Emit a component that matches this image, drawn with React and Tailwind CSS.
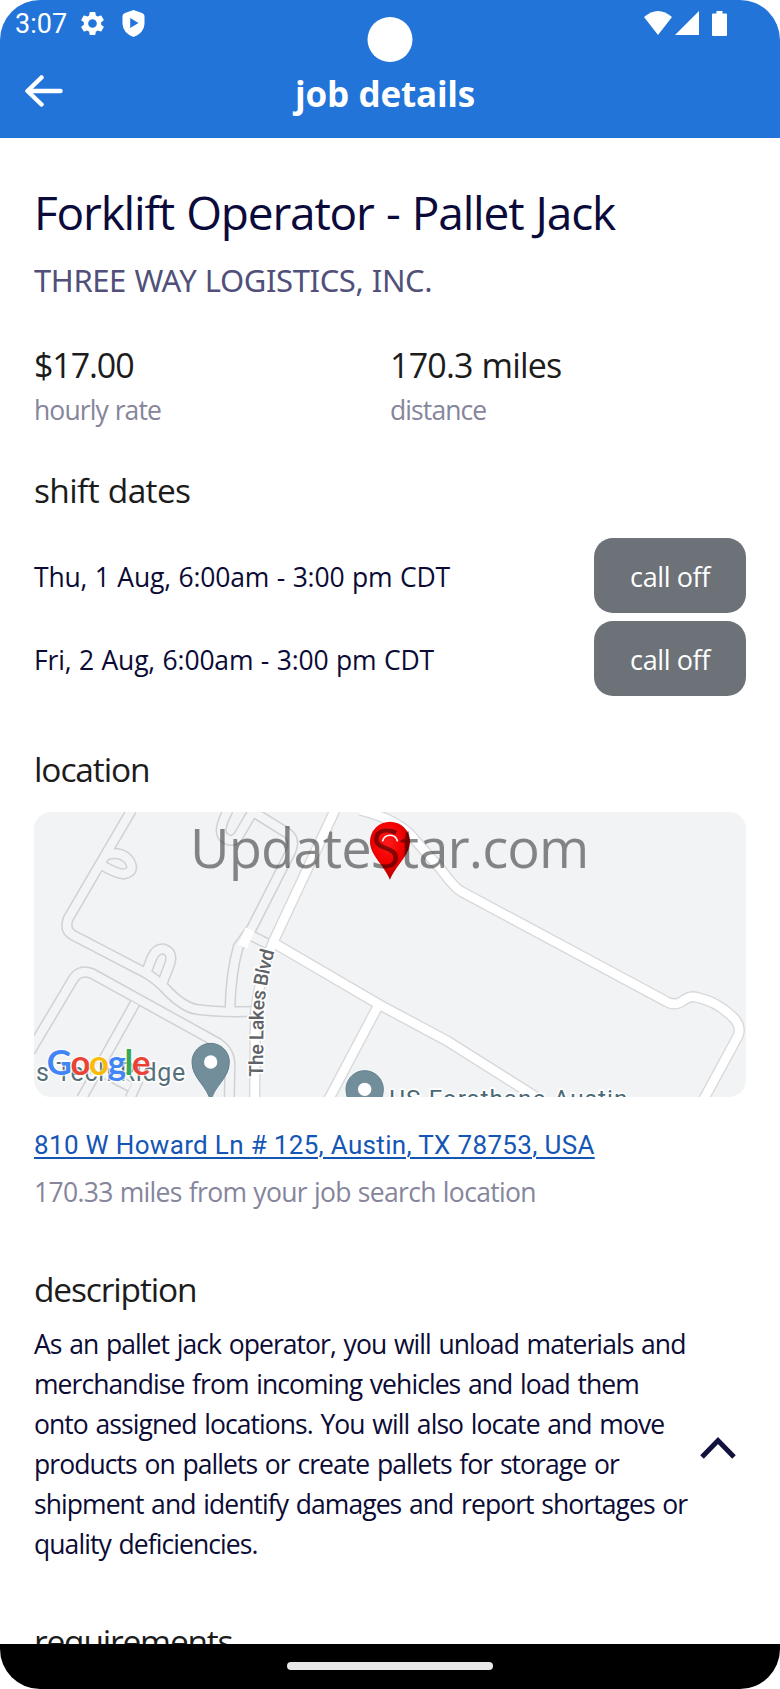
import { MdSettings } from 'react-icons/md';

const shifts = [
  { id: 1, label: 'Thu, 1 Aug, 6:00am - 3:00 pm CDT' },
  { id: 2, label: 'Fri, 2 Aug, 6:00am - 3:00 pm CDT' },
];

const description = [
  'As an pallet jack operator, you will unload materials and',
  'merchandise from incoming vehicles and load them',
  'onto assigned locations. You will also locate and move',
  'products on pallets or create pallets for storage or',
  'shipment and identify damages and report shortages or',
  'quality deficiencies.',
];

// Roads without a fill of their own, drawn as two thin edges
const minorRoads = [
  'M335 30 L145 355 Q132 390 158 405 L375 518 Q410 538 440 570 Q490 622 530 628 Q600 638 700 634',
  'M258 165 Q300 152 325 178 Q350 215 312 222 Q290 222 245 195',
  'M378 520 L395 475 Q408 445 430 447 Q460 455 450 490 L425 555',
  'M30 755 L155 545 Q175 505 215 520 L595 730 Q632 755 630 800 L628 895',
  'M345 610 L185 895',
  'M235 810 L330 860 M355 840 L330 895',
  'M625 30 Q590 95 612 112 Q640 135 660 100 L695 40',
  'M690 30 L800 98 Q828 118 812 155 L695 385 L655 440 Q632 520 630 630',
  'M690 405 L760 440',
];

const mainRoads = [
  'M945 30 L760 425 Q720 520 706 640 L704 895',
  'M760 428 L1080 615 L1280 722 L1550 892',
  'M1072 622 L925 900',
  'M1020 30 Q1140 60 1185 120 L1262 207 Q1305 265 1325 275 L1940 605 Q1962 618 1985 605 Q2010 585 2030 592 Q2090 605 2135 648 Q2165 675 2155 706 L2050 900',
];

function StatusBar() {
  return (
    <div className="flex h-11 items-center justify-between pl-[15px] pr-[53px]">
      <div className="flex items-center">
        <span className="w-[64px] pt-[4px] font-['Roboto'] text-[27px] leading-none">3:07</span>
        <MdSettings className="size-[29px] -ml-px mt-[2px]" />
        <svg className="ml-[15px] mt-[2px] h-[27px] w-[23px]" viewBox="0 0 23 27" fill="currentColor">
          <path
            fillRule="evenodd"
            d="M11.5 0 L20 3 Q22.500 4 22.500 6 V14 Q22 23 11.500 27 Q1 23 .5 14 V6 Q.5 4 3 3 Z M8.200 8 V18 L16.500 13 Z"
          />
        </svg>
      </div>
      <div className="mt-[2px] flex items-center">
        <svg className="h-6 w-7" viewBox="0 0 28 24" fill="currentColor">
          <path d="M0 6 Q14 -6 28 6 L14 24 Z" />
        </svg>
        <svg className="ml-[3px] h-6 w-6" viewBox="0 0 24 24" fill="currentColor">
          <path d="M24 0 V24 H0 Z" />
        </svg>
        <svg className="ml-[13px] h-[25px] w-[15px]" viewBox="0 0 15 25" fill="currentColor">
          <path d="M4.500 0 H10.500 V2.500 H14 Q15 2.500 15 3.500 V24 Q15 25 14 25 H1 Q0 25 0 24 V3.500 Q0 2.500 1 2.500 H4.500 Z" />
        </svg>
      </div>
    </div>
  );
}

function Header() {
  return (
    <header className="relative h-[138px] shrink-0 rounded-t-[40px] bg-[#2274d9] text-white">
      <StatusBar />
      <div className="absolute left-1/2 top-[17px] size-[45px] -translate-x-1/2 rounded-full bg-white" />
      <div className="grid h-[94px] grid-cols-[1fr_auto_1fr] items-center pl-6 pr-[34px]">
        <button type="button" className="h-8 w-10" aria-label="Back">
          <svg className="h-8 w-10" viewBox="0 0 40 32" fill="none" stroke="currentColor" strokeWidth="4.500" strokeLinecap="round" strokeLinejoin="round">
            <path d="M36.500 16 H4 M17.500 2.500 L3.500 16 L17.500 29.500" />
          </svg>
        </button>
        <h1 className="pt-[5px] text-[35px] font-bold leading-[44px] tracking-[-0.2px]">job details</h1>
      </div>
    </header>
  );
}

function PlacePin({ x, y }) {
  return (
    <g transform={`translate(${x} ${y})`}>
      <path d="M0 122 C-8 70 -56 52 -56 0 A56 56 0 0 1 56 0 C56 52 8 70 0 122 Z" fill="#728e9b" stroke="#5f7f8d" strokeWidth="3" />
      <circle r="20" fill="#fff" />
    </g>
  );
}

function LocationMap() {
  return (
    <svg className="mt-[21px] block h-[285px] w-full rounded-[17px] bg-[#f1f3f4]" viewBox="42 36 2136 855" fill="none">
      <defs>
        <radialGradient id="marker" cx="45%" cy="35%" r="65%">
          <stop offset="0" stopColor="#ff1a1a" />
          <stop offset="0.55" stopColor="#f20000" />
          <stop offset="1" stopColor="#b00000" />
        </radialGradient>
        <path id="lakes" d="M729 830 L731 640 Q735 560 766 445" />
      </defs>

      <g strokeLinejoin="round">
        {minorRoads.map((d) => <path key={d} d={d} stroke="#d0d1d3" strokeWidth="34" />)}
        {minorRoads.map((d) => <path key={d} d={d} stroke="#f2f4f5" strokeWidth="25" />)}
        {mainRoads.map((d) => <path key={d} d={d} stroke="#d6d8db" strokeWidth="34" />)}
        {mainRoads.map((d) => <path key={d} d={d} stroke="#fff" strokeWidth="26" />)}
        <path d="M690 388 L668 440" stroke="#fff" strokeWidth="29" />
      </g>

      <g fontFamily="Roboto, sans-serif" stroke="#fff" strokeWidth="10" strokeLinejoin="round" paintOrder="stroke">
        <text fontSize="59" fill="#5f6368" fontWeight="500">
          <textPath href="#lakes" textLength="380">The Lakes Blvd</textPath>
        </text>
        <text x="48" y="844" fontSize="75" fill="#567079" textLength="448">s Tech Ridge</text>
        <text x="1108" y="921" fontSize="73" fill="#4c6a76" textLength="714">US Forathane Austin</text>
      </g>
      <PlacePin x={572} y={786} />
      <PlacePin x={1034} y={868} />

      <text x="80" y="824" fontFamily="Lato, sans-serif" fontWeight="700" fontSize="104" letterSpacing="-4" stroke="#fff" strokeWidth="8" strokeOpacity="0.7" paintOrder="stroke">
        <tspan fill="#4285f4">G</tspan>
        <tspan fill="#ea4335">o</tspan>
        <tspan fill="#fbbc05">o</tspan>
        <tspan fill="#4285f4">g</tspan>
        <tspan fill="#34a853">l</tspan>
        <tspan fill="#ea4335">e</tspan>
      </text>

      <path d="M1110 239 C1092 195 1050 165 1050 125 A60 60 0 0 1 1170 125 C1170 165 1128 195 1110 239 Z" fill="url(#marker)" />
      <path d="M1088 122 A23 23 0 0 1 1132 122" stroke="#fff" strokeWidth="5" strokeLinecap="round" />
      <text x="510" y="203" fontFamily="Open Sans, sans-serif" fontSize="163" fill="#000" fillOpacity="0.46" textLength="1198">UpdateStar.com</text>
    </svg>
  );
}

export default function App() {
  return (
    <div className="flex h-[1689px] w-[780px] flex-col overflow-hidden bg-white font-['Open_Sans',sans-serif] [word-spacing:0.8px]">
      <Header />

      <main className="min-h-0 flex-1 overflow-hidden px-[34px] pt-[44px] text-[#1c1c1c]">
        <h2 className="whitespace-nowrap text-[46px] leading-[60px] tracking-[-1.19px] text-[#0b0b3b] [word-spacing:1.5px]">Forklift Operator - Pallet Jack</h2>
        <p className="mt-[18px] font-['Noto_Sans'] text-[31px] leading-10 tracking-[-0.4px] text-[#50507a]">THREE WAY LOGISTICS, INC.</p>

        <div className="mt-[43px] grid grid-cols-2">
          <div>
            <p className="text-[34px] leading-[44px] tracking-[-1.1px]">$17.00</p>
            <p className="mt-[5px] text-[26.5px] leading-9 tracking-[-0.9px] text-[#85859b]">hourly rate</p>
          </div>
          <div>
            <p className="text-[34px] leading-[44px] tracking-[-0.8px]">170.3 miles</p>
            <p className="mt-[5px] text-[26.5px] leading-9 tracking-[-0.9px] text-[#85859b]">distance</p>
          </div>
        </div>

        <h3 className="mt-10 text-[33.5px] leading-[44px] tracking-[-0.65px]">shift dates</h3>
        <ul className="mt-[26px] flex flex-col gap-2">
          {shifts.map((shift) => (
            <li key={shift.id} className="flex h-[75px] items-center justify-between">
              <span className="pt-[4px] text-[26.5px] tracking-[-0.16px] text-[#0b0b35]">{shift.label}</span>
              <button type="button" className="h-full w-[152px] rounded-[19px] bg-[#6c7277] pt-[3px] text-[27px] tracking-[-0.4px] text-white">
                call off
              </button>
            </li>
          ))}
        </ul>

        <h3 className="mt-[51px] text-[33.5px] leading-[44px] tracking-[-1.1px]">location</h3>
        <LocationMap />
        <a href="#map" className="mt-[30px] block w-fit whitespace-nowrap font-['Roboto'] text-[26px] leading-9 tracking-[0.33px] text-[#1556b5] underline decoration-[1.5px] underline-offset-[3px] [word-spacing:0]">
          810 W Howard Ln # 125, Austin, TX 78753, USA
        </a>
        <p className="mt-[11px] text-[26.5px] leading-9 tracking-[-0.67px] text-[#85859b]">170.33 miles from your job search location</p>

        <h3 className="mt-[57px] text-[33.5px] leading-[44px] tracking-[-1.15px]">description</h3>
        <div className="mt-[13px] flex items-center justify-between">
          <p className="text-[26.5px] leading-10 tracking-[-0.93px] text-[#0b0b35] [word-spacing:1.7px]">
            {description.map((line) => (
              <span key={line} className="block whitespace-nowrap">{line}</span>
            ))}
          </p>
          <svg className="mt-[7px] mr-[10px] h-6 w-9 shrink-0" viewBox="0 0 36 24" fill="none" stroke="#12123e" strokeWidth="5">
            <path d="M2 21 L18 4.500 L34 21" />
          </svg>
        </div>

        <h3 className="mt-[55px] text-[33.5px] leading-[44px] tracking-[-1.2px]">requirements</h3>
      </main>

      <footer className="flex h-[45px] shrink-0 justify-center rounded-b-[40px] bg-black pt-[18px]">
        <div className="h-2 w-[206px] rounded-full bg-[#e8e8e8]" />
      </footer>
    </div>
  );
}
